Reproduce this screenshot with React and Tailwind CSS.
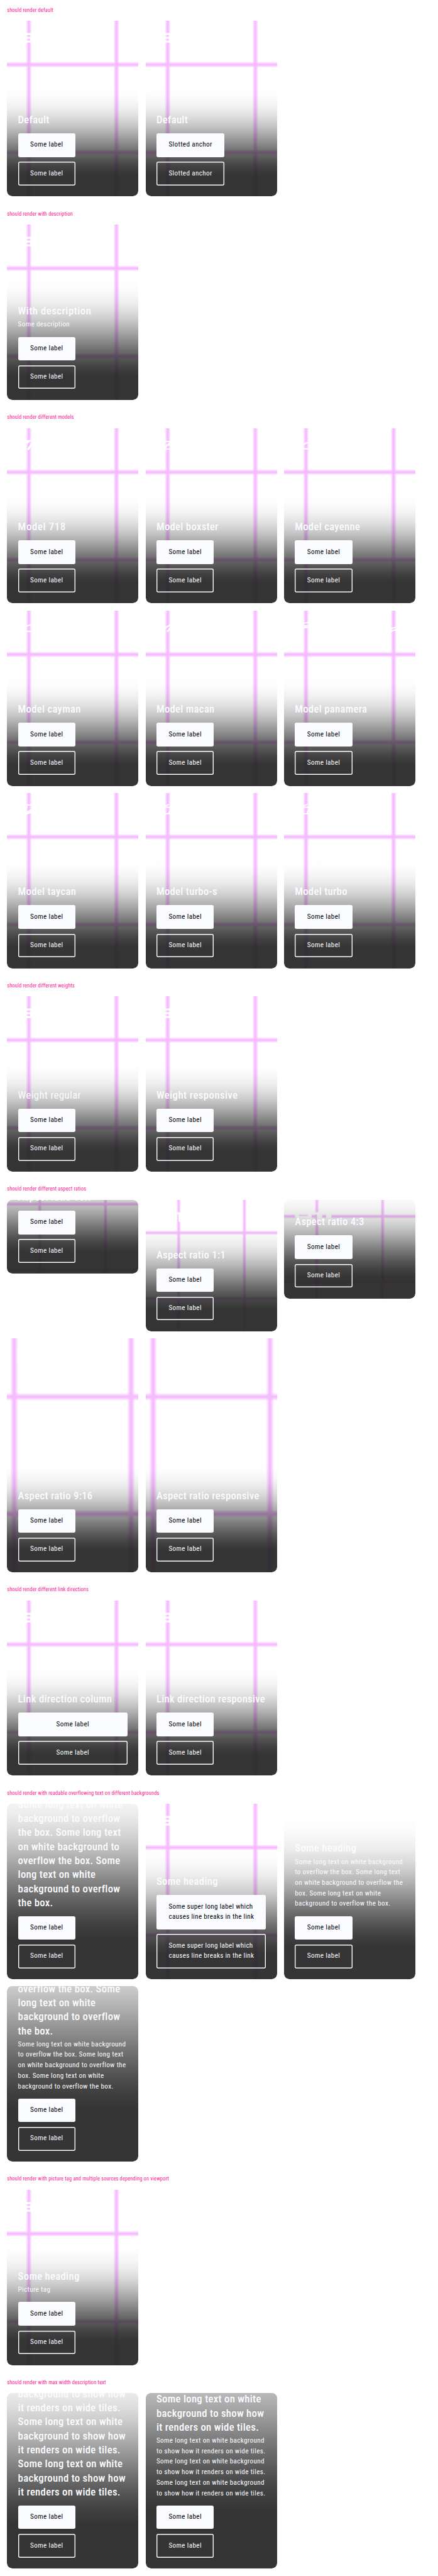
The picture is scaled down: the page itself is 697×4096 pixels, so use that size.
import { useId } from "react";

const SIGNATURES = {
  911: (
    <path
      fill="#fff"
      fillRule="evenodd"
      d="M28 28H60Q63 28 63 31V47Q63 50 60 50H25V45H53V41.3H28Q25 41.3 25 38V31Q25 28 28 28ZM34 32.8V36.6H54V32.8ZM71 28H87V50H75V33H71ZM92 28H108V50H96V33H92Z"
    />
  ),
  718: <path d="M26 29H51L42 36M60 31L48 49" strokeWidth="4.5" />,
  boxster: <path d="M44 30H57L44 45M46 38H58M42 47.3H60" strokeWidth="2.8" />,
  cayenne: <path d="M42 38Q50 33 60 31.5M42 46.8H60" strokeWidth="3.2" />,
  cayman: <path d="M42 36.5Q50 32.5 60 31.2M42 47H60" strokeWidth="3.2" />,
  macan: <path d="M40 42L57 31.5M60 35L49 48" strokeWidth="3.6" />,
  panamera: (
    <path d="M42 29Q50 27 60 27.5M44 34.5H52L44 39.5Q52 39 60 36.3M242 42L258 36.3M243 47L258 43" strokeWidth="2.8" />
  ),
  taycan: <path d="M40 27H60M46 29L42 38M40 47L60 36M42 49Q54 44 60 44M58 38L47 47" strokeWidth="3.2" />,
  turbo: <path d="M43 30L53 26M42 32.3H60M58 36L52 46M42 47.3H60" strokeWidth="2.8" />,
};

function Backdrop() {
  const id = useId();
  const stops = (
    <>
      <stop offset="0" stopColor="#f5baff" stopOpacity="0" />
      <stop offset="0.44" stopColor="#f5baff" />
      <stop offset="0.56" stopColor="#f5baff" />
      <stop offset="1" stopColor="#f5baff" stopOpacity="0" />
    </>
  );
  return (
    <svg className="absolute inset-0 size-full" viewBox="0 0 400 400" preserveAspectRatio="xMidYMid slice">
      <linearGradient id={`${id}v`}>{stops}</linearGradient>
      <linearGradient id={`${id}h`} x2="0" y2="1">
        {stops}
      </linearGradient>
      <rect x="93" width="14" height="400" fill={`url(#${id}v)`} />
      <rect x="293" width="14" height="400" fill={`url(#${id}v)`} />
      <rect y="93" width="400" height="14" fill={`url(#${id}h)`} />
      <rect y="293" width="400" height="14" fill={`url(#${id}h)`} />
    </svg>
  );
}

function Signature({ model }) {
  return (
    <svg className="absolute left-0 top-0 h-16 w-[300px]" viewBox="0 0 300 64" fill="none">
      <g stroke={model === "911" ? "none" : "#fff"}>{SIGNATURES[model]}</g>
    </svg>
  );
}

const OVERLAY =
  "bg-[linear-gradient(to_top,rgba(31,31,31,0.9)_0%,rgba(31,31,31,0.9)_20%,rgba(31,31,31,0.852)_26.67%,rgba(31,31,31,0.768)_33.33%,rgba(31,31,31,0.668)_40%,rgba(31,31,31,0.557)_46.67%,rgba(31,31,31,0.442)_53.33%,rgba(31,31,31,0.332)_60%,rgba(31,31,31,0.232)_66.67%,rgba(31,31,31,0.148)_73.33%,rgba(31,31,31,0.082)_80%,rgba(31,31,31,0.038)_86.67%,rgba(31,31,31,0.012)_93.33%,rgba(31,31,31,0)_100%)]";

function Tile({
  title,
  description,
  label = "Some label",
  model = "911",
  size = "h-[400px]",
  heading = "font-medium tracking-[0.018em]",
  stretch = false,
  plain = false,
}) {
  const link = "flex justify-center rounded px-7 py-[15px]";
  return (
    <article className={`relative flex w-[300px] flex-col justify-end overflow-hidden rounded-xl ${size}`}>
      {!plain && (
        <>
          <Backdrop />
          <Signature model={model} />
        </>
      )}
      <div className={`relative flex shrink-0 flex-col rounded-xl px-[25px] pb-[25px] pt-[57px] text-[#fbfcff] ${OVERLAY}`}>
        <h2 className={`text-2xl/8 ${heading}`}>{title}</h2>
        {description && <p className="mt-1 text-base/6 tracking-[0.032em]">{description}</p>}
        <div className={`mt-[15px] flex flex-col gap-[11px] text-base/6 tracking-[0.033em] ${stretch ? "" : "items-start"}`}>
          <a className={`${link} bg-[#fbfcff] text-[#010205]`}>
            <span>{label}</span>
          </a>
          <a className={`${link} shadow-[inset_0_0_0_2px_#fbfcff]`}>
            <span>{label}</span>
          </a>
        </div>
      </div>
    </article>
  );
}

function Section({ title, children }) {
  return (
    <section className="pb-4">
      <h3 className="flex h-12 items-center text-xs tracking-[0.02em] text-[#ff1493]">{title}</h3>
      <div className="flex flex-wrap items-start gap-4">{children}</div>
    </section>
  );
}

const repeat = (text, count) => Array(count).fill(text).join(" ");
const OVERFLOW = "Some long text on white background to overflow the box.";
const WIDE = "Some long text on white background to show how it renders on wide tiles.";
const MODELS = ["boxster", "cayenne", "cayman", "macan", "panamera", "taycan", "turbo-s", "turbo"];
const LONG_LABEL = (
  <span className="block w-[194px] whitespace-nowrap tracking-[0.028em]">
    Some super long label which
    <br />
    causes line breaks in the link
  </span>
);

export default function App() {
  return (
    <main className="bg-white pl-4 font-['Roboto',sans-serif] font-normal [font-stretch:75%] [zoom:0.6973]">
      <Section title="should render default">
        <Tile title="Default" />
        <Tile title="Default" label="Slotted anchor" />
      </Section>
      <Section title="should render with description">
        <Tile
          title="With description"
          description="Some description"
          heading="font-medium tracking-[0.031em]"
        />
      </Section>
      <Section title="should render different models">
        <Tile title="Model 718" model="718" heading="font-medium tracking-[0.041em]" />
        {MODELS.map((model) => (
          <Tile key={model} title={`Model ${model}`} model={model === "turbo-s" ? "turbo" : model} />
        ))}
      </Section>
      <Section title="should render different weights">
        <Tile title="Weight regular" heading="font-normal tracking-[0.022em]" />
        <Tile title="Weight responsive" heading="font-medium tracking-[0.027em]" />
      </Section>
      <Section title="should render different aspect ratios">
        <Tile title="Aspect ratio 16:9" size="h-[168.75px]" />
        <Tile title="Aspect ratio 1:1" size="h-[300px]" />
        <Tile title="Aspect ratio 4:3" size="h-[225px]" />
        <Tile title="Aspect ratio 9:16" size="h-[533.33px]" />
        <Tile title="Aspect ratio responsive" size="h-[533.33px]" />
      </Section>
      <Section title="should render different link directions">
        <Tile title="Link direction column" stretch />
        <Tile title="Link direction responsive" heading="whitespace-nowrap font-medium tracking-[0.015em]" />
      </Section>
      <Section title="should render with readable overflowing text on different backgrounds">
        <Tile plain title={repeat(OVERFLOW, 3)} />
        <Tile title="Some heading" label={LONG_LABEL} />
        <Tile plain title="Some heading" description={repeat(OVERFLOW, 3)} />
        <Tile plain title={repeat(OVERFLOW, 3)} description={repeat(OVERFLOW, 3)} />
      </Section>
      <Section title="should render with picture tag and multiple sources depending on viewport">
        <Tile title="Some heading" description="Picture tag" />
      </Section>
      <Section title="should render with max width description text">
        <Tile plain title={repeat(WIDE, 3)} />
        <Tile plain title={repeat(WIDE, 3)} description={repeat(WIDE, 3)} />
      </Section>
    </main>
  );
}
